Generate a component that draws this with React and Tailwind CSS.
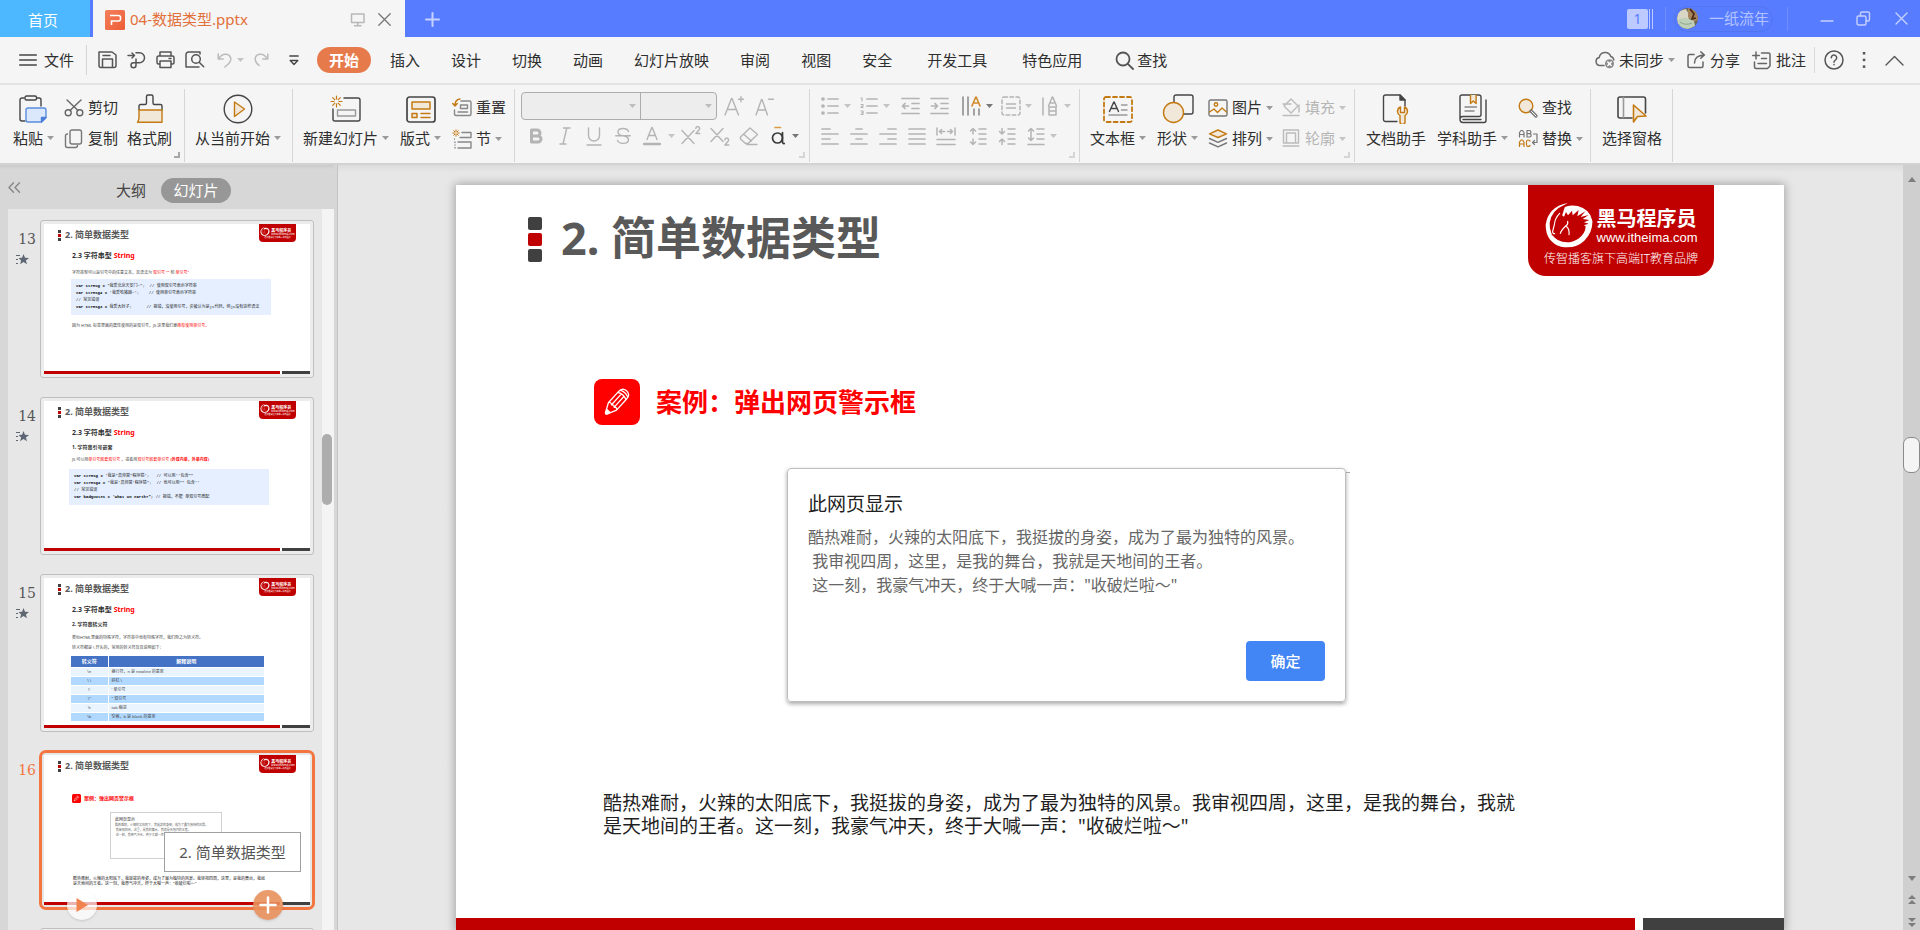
import React from "react";

const DARK = "#454545";
const GREY = "#b4b4b4";
const GOLD = "#c47a12";
const CREAM = "#f1e8da";

/* ---------- small drawing helpers ---------- */

function Ico({ w = 20, h = 20, c = DARK, sw = 1.4, children }) {
  return (
    <svg width={w} height={h} viewBox={`0 0 ${w} ${h}`} fill="none" stroke={c} strokeWidth={sw} strokeLinecap="round" strokeLinejoin="round" className="shrink-0" aria-hidden="true">
      {children}
    </svg>
  );
}

function Caret({ c = "#9a9a9a" }) {
  return (
    <svg width="7" height="4" viewBox="0 0 7 4" className="shrink-0" aria-hidden="true">
      <path d="M0 0h7L3.5 4z" fill={c} />
    </svg>
  );
}

function Launcher({ c = "#d5d5d5" }) {
  return (
    <button aria-label="更多选项" className="absolute right-1 bottom-1">
      <svg width="6" height="6" viewBox="0 0 6 6" className="block">
        <path d="M5 0v5H0" fill="none" stroke={c} strokeWidth="2" />
      </svg>
    </button>
  );
}

/* ---------- ribbon building blocks ---------- */

function Group({ className = "", children }) {
  return <div className={`relative flex shrink-0 border-r border-[#d6d6d6] pt-[3px] ${className}`}>{children}</div>;
}

function BigButton({ icon, label, caret }) {
  return (
    <button className="flex shrink-0 flex-col items-center gap-1 self-start pt-[2px] whitespace-nowrap">
      <span className="flex h-[30px] items-center">{icon}</span>
      <span className="flex h-5 items-center gap-1">
        {label}
        {caret && <Caret />}
      </span>
    </button>
  );
}

function SmallButton({ icon, label, caret, muted }) {
  return (
    <button className={`flex h-[31px] items-center gap-1 whitespace-nowrap ${muted ? "text-[#b5b5b5]" : ""}`}>
      {icon}
      <span>{label}</span>
      {caret && <Caret c={muted ? "#c4c4c4" : "#9a9a9a"} />}
    </button>
  );
}

function Tool({ label, className = "w-[29px]", children }) {
  return (
    <button aria-label={label} className={`flex h-7 shrink-0 items-center justify-center ${className}`}>
      {children}
    </button>
  );
}

function Combo({ label, className }) {
  return (
    <div className={`relative flex items-center ${className}`}>
      <select aria-label={label} disabled className="h-full w-full appearance-none bg-transparent" />
      <span className="pointer-events-none absolute right-1">
        <Caret c="#bdbdbd" />
      </span>
    </div>
  );
}

/* ---------- title bar ---------- */

function TitleBar() {
  return (
    <header className="flex h-[37px] shrink-0 bg-[#587cff] text-[15px]">
      <button className="mr-[3px] w-[90px] bg-[#4db8ff] pt-1 pr-1 text-white">首页</button>
      <div className="flex w-[312px] items-center bg-[#f5f5f5] pt-[2px] pr-[14px] pl-3">
        <svg width="20" height="20" viewBox="0 0 20 20" className="shrink-0" aria-hidden="true">
          <defs>
            <linearGradient id="pg" x1="0" y1="0" x2="1" y2="1">
              <stop offset="0" stopColor="#f4805c" />
              <stop offset="1" stopColor="#ec5c36" />
            </linearGradient>
          </defs>
          <rect width="20" height="20" rx="1.500" fill="url(#pg)" />
          <path d="M5 5.500h8.500a2 2 0 0 1 2 2v1.500a2 2 0 0 1-2 2H6.500V15" fill="none" stroke="#fff" strokeWidth="1.600" />
        </svg>
        <span className="ml-[5px] flex-1 text-[#e2703a]">04-数据类型.pptx</span>
        <Ico w={16} h={14} c="#b8b8b8" sw={1.5}>
          <path d="M1.500 1h12.500v8.500h-12.500zM7.750 9.500v3M4.500 12.800h6.500" />
        </Ico>
        <button aria-label="关闭标签" className="ml-3">
          <Ico w={13} h={13} c="#777" sw={1.3}>
            <path d="M.8.8l11.400 11.400M12.200.8L.8 12.200" />
          </Ico>
        </button>
      </div>
      <button aria-label="新建标签" className="ml-5 pt-[2px]">
        <Ico w={15} h={15} c="#c5d1ff" sw={2}>
          <path d="M7.500 1v13M1 7.500h13" />
        </Ico>
      </button>
      <div className="ml-auto flex items-center pr-3">
        <div className="flex items-center gap-px">
          <span className="flex h-5 w-[21px] items-center justify-center rounded-xs bg-[#bccaff] text-sm text-[#587cff]">1</span>
          <span className="h-5 w-px bg-[#bccaff]" />
          <span className="ml-px h-5 w-px bg-[#bccaff]" />
        </div>
        <span className="ml-3 h-6 w-px bg-[#6f8eff]" />
        <button className="ml-2 flex h-[26px] items-center gap-[11px] rounded-full border border-[#5274ee] pr-[3px] pl-[2px] text-[#b3c3ff]">
          <svg width="21" height="21" viewBox="0 0 21 21" aria-hidden="true">
            <defs>
              <clipPath id="av">
                <circle cx="10.500" cy="10.500" r="10.500" />
              </clipPath>
            </defs>
            <g clipPath="url(#av)">
              <rect width="21" height="21" fill="#6d6656" />
              <path d="M0 6q3-4 9-5l4 7-4 8H0z" fill="#d9d6c6" />
              <path d="M11 0l10 3v9l-5 2-5-5z" fill="#a8845c" />
              <path d="M13 1l4 5-2 5 4-1" stroke="#4a2c18" strokeWidth="1.800" fill="none" />
              <path d="M1 12q6-4 11-1l5 2 1 5-8 4-8-3z" fill="#bfd0b9" />
              <path d="M3 14q5 4 12 1" stroke="#8da48b" fill="none" />
            </g>
          </svg>
          <span>一纸流年</span>
        </button>
        <span className="ml-[14px] h-6 w-px bg-[#6f8eff]" />
        <button aria-label="最小化" className="ml-8">
          <Ico w={14} h={14} c="#c5d1ff">
            <path d="M1 9h12" />
          </Ico>
        </button>
        <button aria-label="还原" className="ml-[22px]">
          <Ico w={15} h={15} c="#c5d1ff">
            <rect x="1" y="5" width="9" height="9" rx="1.500" />
            <path d="M4.500 4.800V2.500a1.500 1.500 0 0 1 1.500-1.500h6a1.500 1.500 0 0 1 1.500 1.500v6a1.500 1.500 0 0 1-1.500 1.500h-1.800" />
          </Ico>
        </button>
        <button aria-label="关闭" className="ml-6">
          <Ico w={13} h={13} c="#c5d1ff">
            <path d="M1 1l11 11M12 1L1 12" />
          </Ico>
        </button>
      </div>
    </header>
  );
}

/* ---------- menu bar ---------- */

function MenuBar() {
  return (
    <nav className="flex h-12 shrink-0 items-center border-b-2 border-[#e4e4e4] bg-[#f5f5f5] pr-4 pl-[19px] text-[15px] whitespace-nowrap">
      <button className="flex items-center gap-[7px]">
        <Ico w={18} h={12}>
          <path d="M.7 1h16.600M.7 6h16.600M.7 11h16.600" />
        </Ico>
        文件
      </button>
      <span className="mr-[11px] ml-3 h-[30px] w-px bg-[#d4d4d4]" />
      <div className="flex items-center gap-[10px]">
        <button aria-label="保存">
          <Ico w={19} h={18} sw={1.5} c="#555">
            <path d="M1 1h13l4 3v10.500a2 2 0 0 1-2 2H3a2 2 0 0 1-2-2z" />
            <path d="M4.500 16V8h10v8M5 4.500h7" />
          </Ico>
        </button>
        <button aria-label="输出">
          <Ico w={19} h={18} sw={1.5} c="#555">
            <path d="M1 4.500h6.500M5 2l2.500 2.500L5 7M9 1.800h3.500a5 5 0 0 1 0 10H6.500a2.500 2.500 0 1 0 2.500 2.500V8" />
          </Ico>
        </button>
        <button aria-label="打印">
          <Ico w={19} h={18} sw={1.5} c="#555">
            <path d="M4 5V1h11v4M4 13H2.500A1.500 1.500 0 0 1 1 11.500V6.500A1.500 1.500 0 0 1 2.500 5h14A1.500 1.500 0 0 1 18 6.500v5a1.500 1.500 0 0 1-1.500 1.500H15M4 10h11v6.500H4zM13 7.500h2" />
          </Ico>
        </button>
        <button aria-label="打印预览">
          <Ico w={20} h={18} sw={1.5} c="#555">
            <path d="M15 3V1H3.500A2.500 2.500 0 0 0 1 3.500V16h13" />
            <circle cx="11" cy="8" r="4.300" />
            <path d="M14.200 11.200l4.500 4.500" />
          </Ico>
        </button>
        <button aria-label="撤销" className="ml-[2px] flex items-center gap-[5px]">
          <Ico w={15} h={16} c="#bcbcbc" sw={1.5}>
            <path d="M1.200 2v5h5M1.500 6.800Q5 1.500 9.500 2.300q4.500 1 4.300 5.200-.3 3.500-6 7.500" />
          </Ico>
          <Caret c="#c4c4c4" />
        </button>
        <button aria-label="重做">
          <Ico w={15} h={16} c="#bcbcbc" sw={1.5}>
            <path d="M13.800 2v5h-5M13.500 6.800Q10 1.500 5.500 2.300 1 3.300 1.200 7.500q.3 3.500 4 6" />
          </Ico>
        </button>
        <button aria-label="自定义" className="ml-[10px]">
          <Ico w={10} h={11} sw={1.3}>
            <path d="M.8 1h8.400M1.200 5.500h7.600L5 9.500z" />
          </Ico>
        </button>
      </div>
      <div className="ml-[18px] flex items-center gap-[31px] text-[#2e2e2e]">
        <button className="-mr-3 h-[26px] rounded-full bg-[#e77a4b] px-3 font-bold text-white">开始</button>
        <button>插入</button>
        <button>设计</button>
        <button>切换</button>
        <button>动画</button>
        <button>幻灯片放映</button>
        <button>审阅</button>
        <button>视图</button>
        <button>安全</button>
        <button className="mx-1">开发工具</button>
        <button>特色应用</button>
        <button className="ml-[2px] flex items-center gap-[3px]">
          <Ico w={19} h={19} sw={1.8} c="#555">
            <circle cx="8" cy="8" r="6.500" />
            <path d="M12.800 12.800l5.200 5.200" />
          </Ico>
          查找
        </button>
      </div>
      <div className="ml-auto flex items-center text-[#2e2e2e]">
        <button className="flex items-center gap-1">
          <Ico w={20} h={18} c="#6a6a6a" sw={1.5}>
            <path d="M9 14.500H5a4 4 0 0 1-.8-7.900A6 6 0 0 1 15.800 5.500a4 4 0 0 1 3 3.500" />
            <circle cx="14.500" cy="12.800" r="4.500" fill="#8a8a8a" stroke="none" />
            <path d="M12.800 11.100l3.400 3.400M16.200 11.100l-3.400 3.400" stroke="#fff" />
          </Ico>
          未同步
          <Caret />
        </button>
        <button className="ml-3 flex items-center gap-1">
          <Ico w={19} h={18} c="#666" sw={1.500}>
            <path d="M7 3.500H2.500A1.500 1.500 0 0 0 1 5v10a1.500 1.500 0 0 0 1.500 1.500h12A1.500 1.500 0 0 0 16 15v-4M7.500 12q0-7.500 9.500-8M13.800.9l3.600 3.100-3.600 3.200" />
          </Ico>
          分享
        </button>
        <button className="ml-3 flex items-center gap-1">
          <Ico w={20} h={19} c="#666" sw={1.500}>
            <path d="M4 1v7M.7 4.500h6.600M9.500 2h7A1.500 1.500 0 0 1 18 3.500V15l-2.500 2.500H4A1.500 1.500 0 0 1 2.500 16v-5M9.500 7.500h5M6 12.500h8.500" />
          </Ico>
          批注
        </button>
        <span className="mr-[9px] ml-2 h-[26px] w-px bg-[#d9d9d9]" />
        <button aria-label="帮助">
          <Ico w={20} h={20} sw={1.500} c="#555">
            <circle cx="10" cy="10" r="9" />
            <path d="M7.300 7.800a2.700 2.700 0 1 1 4.200 2.200c-1 .7-1.500 1.100-1.500 2.200M10 14.500v.3" />
          </Ico>
        </button>
        <button aria-label="更多" className="ml-[18px]">
          <svg width="4" height="16" viewBox="0 0 4 16" fill="#555">
            <rect x=".8" y="0" width="2.500" height="2.500" />
            <rect x=".8" y="6.700" width="2.500" height="2.500" />
            <rect x=".8" y="13.400" width="2.500" height="2.500" />
          </svg>
        </button>
        <button aria-label="收起功能区" className="ml-[19px]">
          <Ico w={19} h={11} c="#555">
            <path d="M1 10l8.500-8.500L18 10" />
          </Ico>
        </button>
      </div>
    </nav>
  );
}

/* ---------- ribbon ---------- */

function FontGroup() {
  return (
    <Group className="w-[295px] flex-col gap-[2px] pl-[6px]">
      <div className="flex items-center">
        <div className="flex h-7 w-[196px] overflow-hidden rounded border border-[#acacac] bg-[#ededed]">
          <Combo label="字体" className="w-[119px] border-r border-[#acacac]" />
          <Combo label="字号" className="flex-1" />
        </div>
        <Tool label="增大字号" className="ml-[6px] w-[22px]">
          <Ico w={20} h={20} c={GREY}>
            <path d="M1 19L7.500 2.500h.5L14.500 19M3.500 13.500h8.500M17 .8v5M14.500 3.300h5" />
          </Ico>
        </Tool>
        <Tool label="减小字号" className="ml-2 w-[22px]">
          <Ico w={20} h={20} c={GREY}>
            <path d="M2 19L7.500 3.500h.5L13.500 19M4.200 14h7.500M14.500 3.300h5" />
          </Ico>
        </Tool>
      </div>
      <div className="flex items-center">
        <Tool label="加粗">
          <Ico w={14} h={16} c={GREY} sw={3}>
            <path d="M2.500 2h5.500a3 3 0 0 1 0 6H2.500zM2.500 8h6.500a3 3 0 0 1 0 6H2.500z" />
          </Ico>
        </Tool>
        <Tool label="斜体">
          <Ico w={12} h={18} c={GREY}>
            <path d="M4.500 1h6.500M1 17h6M7.800 1L4 17" />
          </Ico>
        </Tool>
        <Tool label="下划线">
          <Ico w={16} h={19} c={GREY}>
            <path d="M2.500 1v7.500a5.500 5.500 0 0 0 11 0V1M1 18h14" />
          </Ico>
        </Tool>
        <Tool label="删除线">
          <Ico w={16} h={18} c={GREY}>
            <path d="M13.500 4.500Q12.500 1.500 8 1.500 3 1.500 3 5q0 3 5 3.800 5.500 1 5.500 4 0 3.600-5.500 3.600-4.500 0-5.500-3M.7 8.800h14.600" />
          </Ico>
        </Tool>
        <Tool label="字体颜色">
          <Ico w={18} h={20} c={GREY}>
            <path d="M4 13.500L8.800 1.500h.4L14 13.500M5.500 9.500h7" />
            <path d="M1 18h16" strokeWidth="2.500" />
          </Ico>
        </Tool>
        <Tool label="字体颜色选项" className="w-[10px]">
          <Caret c="#c4c4c4" />
        </Tool>
        <Tool label="上标">
          <Ico w={20} h={20} c={GREY}>
            <path d="M1 4.500l12 13M13 4.500L1 17.500M14.800 2.500a1.900 1.900 0 1 1 3.300 1.300L14.900 7.500h3.900" />
          </Ico>
        </Tool>
        <Tool label="下标">
          <Ico w={20} h={20} c={GREY}>
            <path d="M1 2.500l12 13M13 2.500L1 15.500M14.800 14a1.900 1.900 0 1 1 3.300 1.300L14.900 19h3.900" />
          </Ico>
        </Tool>
        <Tool label="清除格式">
          <Ico w={20} h={19} c={GREY}>
            <path d="M1.500 10L11 1l7.500 6.500L9 16.500H6.500L1.500 12zM5 7.500l7.500 6.500M8 17.500h10" />
          </Ico>
        </Tool>
        <Tool label="拼音指南">
          <Ico w={14} h={20} c="#3a3a3a" sw={1.700}>
            <circle cx="6.500" cy="12" r="5" />
            <path d="M11.500 6.500v9q0 2.500 2 2" />
            <path d="M4 1.500h5.500" stroke="#dd9a45" />
          </Ico>
        </Tool>
        <Caret c="#777" />
      </div>
      <Launcher />
    </Group>
  );
}

function Lines({ rows }) {
  return rows.map(([x1, x2], i) => <path key={i} d={`M${x1} ${2 + i * 5}H${x2}`} />);
}

function ParagraphGroup() {
  const full = [[1, 17], [1, 17], [1, 17], [1, 17]];
  return (
    <Group className="w-[270px] flex-col gap-[2px] pl-[5px]">
      <div className="flex items-center">
        <Tool label="项目符号">
          <Ico w={18} h={18} c={GREY} sw={1.700}>
            <path d="M7 2h10M7 9h10M7 16h10" />
            <circle cx="2" cy="2" r="1" />
            <circle cx="2" cy="9" r="1" />
            <circle cx="2" cy="16" r="1" />
          </Ico>
        </Tool>
        <Caret c="#c4c4c4" />
        <Tool label="编号" className="ml-[3px] w-[29px]">
          <Ico w={18} h={18} c={GREY} sw={1.700}>
            <path d="M7 2h10M7 9h10M7 16h10" />
            <path d="M1 1h1v3M1 7.500h2v1.200l-2 1.600h2M1 14h2v3.300H1M2 15.600h1" strokeWidth="1.200" />
          </Ico>
        </Tool>
        <Caret c="#c4c4c4" />
        <Tool label="减少缩进" className="ml-[6px] w-[29px]">
          <Ico w={19} h={18} c={GREY} sw={1.700}>
            <path d="M1 1.500h17M11 6.500h7M11 11.500h7M1 16.500h17M1.500 9h6M4 6.500L1.500 9 4 11.500" />
          </Ico>
        </Tool>
        <Tool label="增加缩进">
          <Ico w={19} h={18} c={GREY} sw={1.700}>
            <path d="M1 1.500h17M11 6.500h7M11 11.500h7M1 16.500h17M1.500 9h6M5 6.500L7.500 9 5 11.500" />
          </Ico>
        </Tool>
        <Tool label="文字方向" className="ml-[3px] w-[29px]">
          <Ico w={19} h={20} c="#8f8f8f" sw={1.600}>
            <path d="M1 1v18M6 1v18M12 13v6M17 13v6" />
            <path d="M10 10l3.800-9h.4L18 10M11.500 7h5" stroke="#d18a2a" />
          </Ico>
        </Tool>
        <Caret c="#777" />
        <Tool label="对齐文本" className="ml-[3px] w-[29px]">
          <Ico w={20} h={20} c={GREY} sw={1.500}>
            <rect x="1" y="1" width="18" height="18" rx="2" strokeDasharray="3.500 2.500" />
            <path d="M5.500 8h9M5.500 12h9" />
          </Ico>
        </Tool>
        <Caret c="#c4c4c4" />
        <Tool label="转换图形" className="ml-[3px] w-[29px]">
          <Ico w={16} h={20} c={GREY} sw={1.500}>
            <path d="M1 2v17M6.500 10l3.800-9h.4l3.800 9M8 7h5M7 19v-8h7v8zM7 15h7" />
          </Ico>
        </Tool>
        <Caret c="#c4c4c4" />
      </div>
      <div className="flex items-center">
        <Tool label="左对齐">
          <Ico w={18} h={19} c={GREY} sw={1.700}><Lines rows={[[1, 9], [1, 17], [1, 9], [1, 17]]} /></Ico>
        </Tool>
        <Tool label="居中">
          <Ico w={18} h={19} c={GREY} sw={1.700}><Lines rows={[[6, 12], [1, 17], [6, 12], [1, 17]]} /></Ico>
        </Tool>
        <Tool label="右对齐">
          <Ico w={18} h={19} c={GREY} sw={1.700}><Lines rows={[[9, 17], [1, 17], [9, 17], [1, 17]]} /></Ico>
        </Tool>
        <Tool label="两端对齐">
          <Ico w={18} h={19} c={GREY} sw={1.700}><Lines rows={full} /></Ico>
        </Tool>
        <Tool label="分散对齐">
          <Ico w={20} h={19} c={GREY} sw={1.500}>
            <path d="M1 1v7M19 1v7M3.500 4.500h5M5.500 2.500l-2 2 2 2M11.500 4.500h5M14.500 2.500l2 2-2 2M1 12.500h18M1 17.500h18" />
          </Ico>
        </Tool>
        <Tool label="增大行距" className="ml-[3px] w-[29px]">
          <Ico w={18} h={19} c={GREY} sw={1.500}>
            <path d="M10 2h7M10 7h7M10 12h7M10 17h7M4 7V1.500M1.500 4L4 1.500 6.500 4M4 12v5.500M1.500 15L4 17.500 6.500 15" />
          </Ico>
        </Tool>
        <Tool label="减小行距">
          <Ico w={18} h={19} c={GREY} sw={1.500}>
            <path d="M10 2h7M10 7h7M10 12h7M10 17h7M4 1.500V7M1.500 4.500L4 7l2.500-2.500M4 17.500V12M1.500 14.500L4 12l2.500 2.500" />
          </Ico>
        </Tool>
        <Tool label="行距">
          <Ico w={18} h={19} c={GREY} sw={1.500}>
            <path d="M10 2h7M10 7h7M10 12h7M1 17.500h16M4 1.500v12M1.500 4L4 1.500 6.500 4M1.500 11L4 13.500 6.500 11" />
          </Ico>
        </Tool>
        <Caret c="#c4c4c4" />
      </div>
      <Launcher />
    </Group>
  );
}

function Ribbon() {
  return (
    <section className="flex h-[80px] shrink-0 items-stretch overflow-hidden border-b-2 border-[#d2d2d2] bg-[#f5f5f5] pt-1 pb-px text-[15px] text-[#2e2e2e]">
      <Group className="w-[185px] pl-[13px]">
        <BigButton
          label="粘贴"
          caret
          icon={
            <Ico w={30} h={28}>
              <path d="M5 3H3a2 2 0 0 0-2 2v19a2 2 0 0 0 2 2h3M18 3h2a2 2 0 0 1 2 2v6" />
              <rect x="6" y="1" width="11.500" height="4" rx="1.500" />
              <path d="M9 13h16a2 2 0 0 1 2 2v7.500L22.500 27H9a2 2 0 0 1-2-2V15a2 2 0 0 1 2-2z" fill="#dbe7fa" stroke="#5b8de0" />
              <path d="M27 22.500h-4.500V27z" fill="#4d7fd8" stroke="#4d7fd8" />
            </Ico>
          }
        />
        <div className="ml-[10px]">
          <SmallButton
            label="剪切"
            icon={
              <Ico w={20} h={18} c="#666">
                <circle cx="4.200" cy="13.700" r="3" />
                <circle cx="15.800" cy="13.700" r="3" />
                <path d="M6 11.500L17 1M14 11.500L3 1" />
              </Ico>
            }
          />
          <SmallButton
            label="复制"
            icon={
              <Ico w={20} h={20} c="#777">
                <rect x="6" y="1" width="11.500" height="14" rx="2" />
                <path d="M3.500 5Q1.500 5 1.500 7v9.500a2 2 0 0 0 2 2h8a2 2 0 0 0 2-2" />
              </Ico>
            }
          />
        </div>
        <div className="ml-[9px]">
          <BigButton
            label="格式刷"
            icon={
              <Ico w={28} h={30}>
                <path d="M3 16v-4a1.500 1.500 0 0 1 1.500-1.500H9q1.500 0 1.500-1.500V2.500A1.500 1.500 0 0 1 12 1h3.500A1.500 1.500 0 0 1 17 2.500V9q0 1.500 1.500 1.500h6A1.500 1.500 0 0 1 26 12v4" />
                <path d="M3 16h23v12.300H1.500Q3 26 3 24z" fill={CREAM} stroke={GOLD} />
              </Ico>
            }
          />
        </div>
        <Launcher c="#a8a8a8" />
      </Group>

      <Group className="w-[108px] pl-[10px]">
        <BigButton
          label="从当前开始"
          caret
          icon={
            <Ico w={30} h={30}>
              <circle cx="15" cy="15" r="13.800" />
              <path d="M11.500 8v14.500L21.500 15z" fill={CREAM} stroke={GOLD} />
            </Ico>
          }
        />
      </Group>

      <Group className="w-[222px] gap-[11px] pl-[10px]">
        <BigButton
          label="新建幻灯片"
          caret
          icon={
            <Ico w={32} h={28}>
              <path d="M14 3h14a2 2 0 0 1 2 2v19a2 2 0 0 1-2 2H5a2 2 0 0 1-2-2V14" />
              <rect x="7.500" y="15" width="18" height="6" stroke="#999" />
              <path d="M6.500 1v11M1 6.500h11M2.700 2.700l7.600 7.600M10.300 2.700l-7.600 7.600" stroke={GOLD} strokeWidth="1.200" />
              <circle cx="6.500" cy="6.500" r="2" fill="#f5f5f5" stroke="none" />
            </Ico>
          }
        />
        <BigButton
          label="版式"
          caret
          icon={
            <Ico w={30} h={27} sw={1.700}>
              <rect x="1" y="1" width="28" height="25" rx="2.500" />
              <path d="M6 6h18v7H6zM6 17.500h5v4H6zM15 17.500h9M15 21.500h9" stroke={GOLD} fill={CREAM} strokeWidth="1.500" />
            </Ico>
          }
        />
        <div>
          <SmallButton
            label="重置"
            icon={
              <Ico w={20} h={19} c="#888">
                <path d="M9 3h8.500A1.500 1.500 0 0 1 19 4.500V16a1.500 1.500 0 0 1-1.500 1.500H4A1.500 1.500 0 0 1 2.500 16v-4M8.500 7h7v3.500h-7zM6 14h9.500" />
                <path d="M8 1Q3 1.500 3 7.500M.7 5.500L3 8l2.300-2.500" stroke={GOLD} />
              </Ico>
            }
          />
          <SmallButton
            label="节"
            caret
            icon={
              <Ico w={20} h={20} c="#888">
                <path d="M10 3.500h9v5H8M6 13h13v6H6M3 13v.5M3 19v-.5M3 16v.1M2.500 10v.1" />
                <path d="M4 .8v6.400M.8 4h6.400M1.700 1.700l4.600 4.600M6.300 1.700L1.700 6.300" stroke={GOLD} strokeWidth="1" />
                <circle cx="4" cy="4" r="1" fill="#f5f5f5" stroke="none" />
              </Ico>
            }
          />
        </div>
      </Group>

      <FontGroup />
      <ParagraphGroup />

      <Group className="w-[275px] pl-[10px]">
        <BigButton
          label="文本框"
          caret
          icon={
            <Ico w={30} h={27}>
              <rect x="1" y="1" width="28" height="25" rx="2" stroke={GOLD} strokeWidth="1.800" strokeDasharray="4 3" />
              <path d="M6.500 15.500L10.800 6h.4l4.300 9.500M8 12.500h6" />
              <path d="M18.500 9h5.500M18.500 14h5.500M6 19h18" stroke="#999" />
            </Ico>
          }
        />
        <div className="ml-[11px]">
          <BigButton
            label="形状"
            caret
            icon={
              <Ico w={32} h={30}>
                <rect x="12" y="1" width="19" height="19" rx="2" />
                <circle cx="11.500" cy="18.500" r="10" fill={CREAM} stroke={GOLD} />
              </Ico>
            }
          />
        </div>
        <div className="ml-[10px]">
          <SmallButton
            label="图片"
            caret
            icon={
              <Ico w={20} h={18} c="#777">
                <rect x="1" y="1" width="18" height="16" rx="1.500" />
                <path d="M1.500 13l4.500-3 3.500 3.500 4.500-4.500 4.500 4" stroke={GOLD} />
                <circle cx="8" cy="5.500" r="1.700" stroke={GOLD} />
              </Ico>
            }
          />
          <SmallButton
            label="排列"
            caret
            icon={
              <Ico w={20} h={19} c="#777">
                <path d="M10 1l8.500 3.800L10 8.500 1.500 4.800z" fill={CREAM} stroke={GOLD} />
                <path d="M1.500 9.500L10 13.300l8.500-3.800M1.500 14L10 17.800l8.500-3.800" />
              </Ico>
            }
          />
        </div>
        <div className="ml-[9px]">
          <SmallButton
            label="填充"
            caret
            muted
            icon={
              <Ico w={19} h={19} c="#bbb">
                <path d="M2 8l7-7 7 7-7 7zM1 6h8M17 7v7M1 17.500h16" />
              </Ico>
            }
          />
          <SmallButton
            label="轮廓"
            caret
            muted
            icon={
              <Ico w={19} h={19} c="#bbb">
                <path d="M1.500 1h15v13h-15zM4.500 4h9v10h-9zM1 17h16" />
              </Ico>
            }
          />
        </div>
        <Launcher />
      </Group>

      <Group className="w-[236px] pl-[11px]">
        <BigButton
          label="文档助手"
          icon={
            <Ico w={28} h={30}>
              <path d="M15 27.500H3.500a2 2 0 0 1-2-2V3a2 2 0 0 1 2-2H18l5 5v6" />
              <path d="M18 1v5h5z" fill={DARK} />
              <path d="M18.500 13v5.500h4V13q3 1.200 3 4.500 0 2.500-2.500 4V28a2 2 0 0 1-5 0v-6.500q-2.500-1.500-2.500-4 0-3.300 3-4.500z" fill={CREAM} stroke={GOLD} />
            </Ico>
          }
        />
        <div className="ml-[11px]">
          <BigButton
            label="学科助手"
            caret
            icon={
              <Ico w={30} h={30}>
                <path d="M4 22.500h17a2 2 0 0 0 2-2V3a2 2 0 0 0-2-2H4a2 2 0 0 0-2 2v22.500a3 3 0 0 0 3 3h21a2 2 0 0 0 2-2V6M2 25q0-2.500 3-2.500M5 25.500h18" />
                <path d="M12.500 1v8.500L15.300 7l2.800 2.500V1" fill={CREAM} stroke={GOLD} />
                <path d="M7 13h11.500M7 17h9" stroke="#888" />
              </Ico>
            }
          />
        </div>
        <div className="ml-[10px]">
          <SmallButton
            label="查找"
            icon={
              <Ico w={20} h={20}>
                <circle cx="8" cy="8" r="6.800" fill={CREAM} stroke={GOLD} />
                <path d="M13 13l5 5" stroke="#777" strokeWidth="3.200" />
                <path d="M13.500 13.500l4.500 4.500" stroke="#fff" strokeWidth="1" />
              </Ico>
            }
          />
          <SmallButton
            label="替换"
            caret
            icon={
              <Ico w={20} h={19} c="#777">
                <path d="M1.500 8V3.500L3 1.500h1.500L6 3.500V8M1.500 5.500H6M9 1.500v6.500h2.500a1.600 1.600 0 0 0 0-3.300H9h2.300a1.600 1.600 0 0 0 0-3.200z" strokeWidth="1.200" />
                <path d="M1.500 17.500V13L3 11h1.500L6 13v4.500M1.500 15H6M12 12q-1-1-2-1-1.500 0-1.500 2v2.500q0 2 1.500 2 1 0 2-1" stroke={GOLD} strokeWidth="1.200" />
                <path d="M15.500 5H19v8.500h-4.500M16.500 11.500l-2 2 2 2" strokeWidth="1.200" />
              </Ico>
            }
          />
        </div>
      </Group>

      <Group className="w-[82px] pl-[11px]">
        <BigButton
          label="选择窗格"
          icon={
            <Ico w={30} h={28} sw={1.600}>
              <path d="M15 23H3a2 2 0 0 1-2-2V4a2 2 0 0 1 2-2h23.500a2 2 0 0 1 2 2v14" />
              <path d="M6.500 2.500V22.500" stroke="#999" />
              <path d="M16.500 10v17l4-5.500 8.500-.5z" fill={CREAM} stroke={GOLD} />
            </Ico>
          }
        />
      </Group>
    </section>
  );
}

/* ---------- brand badge ---------- */

function Horse({ w, h }) {
  return (
    <svg width={w} height={h} viewBox="194 124 144 138" aria-hidden="true" className="shrink-0">
      <path d="M258 128Q204 140 196 192q0 52 46 66 42 8 70-18 26-26 24-60-6-34-44-44-28-6-52 10 4-8 22-20z" fill="#fff" />
      <path d="M256 131Q214 148 208 186q-2 36 24 52 32 16 62-4 22-16 22-38l-6-2 15-5-14-4 16-7-20-3 18-12-24 6 14-17-24 15 4-19-18 16-2-14-12 14-6-10-6 14-10-7q-20 12-22 44l-5 14q-1 10 8 2 8-30 20-44l-4 2q-12 16-16 42l8-8z" fill="#c00000" />
      <path d="M238 158q-14 14-16 34l-5 20q0 8 6 7M262 182q2 10-6 14-14 14-16 22M256 196q12 6 10 26" fill="none" stroke="#fff" strokeWidth="3.500" strokeLinecap="round" />
    </svg>
  );
}

function Badge() {
  return (
    <div className="flex h-[91px] w-[186px] flex-col items-center rounded-b-[18px] bg-[#c00000] pt-[17px] text-white">
      <div className="flex items-center gap-1">
        <Horse w={48} h={46} />
        <div className="w-[101px] pt-1">
          <p className="text-xl leading-[22px] font-bold">黑马程序员</p>
          <p className="font-[Liberation_Sans] text-[13px] leading-4">www.itheima.com</p>
        </div>
      </div>
      <p className="text-xs leading-[22px] font-light whitespace-nowrap">传智播客旗下高端IT教育品牌</p>
    </div>
  );
}

function MiniBadge() {
  return (
    <div className="flex h-[18px] w-[37px] flex-col items-center rounded-b bg-[#c00000] pt-[3px] text-white">
      <div className="flex items-center gap-px">
        <Horse w={10} h={9} />
        <div>
          <p className="text-[4px] leading-[5px] font-bold">黑马程序员</p>
          <p className="font-[Liberation_Sans] text-[3px] leading-[3px]">www.itheima.com</p>
        </div>
      </div>
      <p className="text-[2px] leading-[4px]">传智播客旗下高端IT教育品牌</p>
    </div>
  );
}

function Pencil({ size }) {
  return (
    <svg width={size} height={size} viewBox="0 0 46 46" className="shrink-0" aria-hidden="true">
      <rect width="46" height="46" rx="8" fill="#fe0000" />
      <g transform="rotate(42 22.500 23)" fill="none" stroke="#fff" strokeWidth="1.300" strokeLinejoin="round">
        <path d="M17 14q0-6 5.500-6t5.500 6v15l-4.500 9.500q-1 1-2 0L17 29z" />
        <path d="M17 12q5.500-3 11 0M17 15q5.500-3 11 0M20.700 14v14M24.300 14v14M17 28.500q1.800-2 3.700 0 1.800-2 3.600 0 1.800-2 3.700 0" />
        <path d="M20.300 35h4.400l-1.500 3.500h-1.400z" fill="#fff" />
      </g>
    </svg>
  );
}

/* ---------- thumbnails ---------- */

function Thumb({ n, selected, children, overlay }) {
  return (
    <li className="flex">
      <div className={`w-8 shrink-0 pt-[9px] pr-1 text-right font-[DejaVu_Serif] text-sm leading-5 ${selected ? "text-[#f3753f]" : "text-[#555]"}`}>
        {n}
        {!selected && (
          <svg width="13" height="11" viewBox="0 0 13 11" className="mt-[5px] ml-2" aria-label="动画">
            <path d="M7.500 0l1.500 3.700 4 .2-3.100 2.500 1.100 3.900-3.500-2.200L4.100 10.300l1-3.900L2.500 3.900l3.600-.2z" fill="#5f6674" />
            <path d="M0 1.500h4M0 5.500h2M0 9.500h2" stroke="#5f6674" />
          </svg>
        )}
      </div>
      <div className={`relative rounded-[3px] border p-[3px] ${selected ? "rounded-md border-transparent outline-3 -outline-offset-2 outline-[#f3753f]" : "border-[#bfbfbf] bg-[#ececec]"}`}>
        <article className="flex h-[150px] w-[266px] flex-col overflow-hidden bg-white">
          <div className="flex items-start pr-[14px] pl-[14px]">
            <div className="mt-[6px] flex flex-col gap-px">
              <i className="size-[3px] bg-[#404040]" />
              <i className="size-[3px] bg-[#c00000]" />
              <i className="size-[3px] bg-[#404040]" />
            </div>
            <h3 className="mt-1 ml-1 flex-1 text-[9px] leading-[14px] font-bold text-[#595959]">2. 简单数据类型</h3>
            <MiniBadge />
          </div>
          <div className="flex-1 pl-7 text-[4px] leading-[10px] whitespace-pre text-[#444]">{children}</div>
          <div className="flex h-[3px] gap-[2px]">
            <i className="flex-1 bg-[#c00000]" />
            <i className="w-7 bg-[#404040]" />
          </div>
        </article>
        {overlay}
      </div>
    </li>
  );
}

function StringHeading() {
  return (
    <h4 className="mt-[9px] text-[7px] leading-[10px] font-bold text-[#333]">
      2.3 字符串型 <span className="text-[#f00]">String</span>
    </h4>
  );
}

function CodeBox({ className, lines }) {
  return (
    <div className={`h-9 w-[200px] bg-[#e5efff] pt-1 pl-[5px] font-[Liberation_Mono,Noto_Sans_CJK_SC] leading-[7px] text-[#222] ${className}`}>
      {lines.map(([a, b], i) => (
        <p key={i}>
          <b className="text-black">{a}</b>
          {b}
        </p>
      ))}
    </div>
  );
}

const ESCAPES = [
  ["\\n", "换行符，n 是 newline 的意思"],
  ["\\ \\", "斜杠 \\"],
  ["\\'", "' 单引号"],
  ['\\"', '" 双引号'],
  ["\\t", "tab 缩进"],
  ["\\b", "空格，b 是 blank 的意思"],
];

function SlidePanel() {
  return (
    <aside className="flex w-[338px] shrink-0 flex-col border-r border-[#c4c4c4] bg-[#d7d7d7] pr-[3px]">
      <div className="flex h-[44px] shrink-0 items-center bg-linear-to-b from-[#cbcbcb] to-[#d7d7d7] to-10% pt-[7px] pl-2 text-[15px]">
        <button aria-label="收起面板" className="pb-[6px]">
          <Ico w={13} h={11} c="#888">
            <path d="M5.500.8L1 5.500l4.500 4.700M11.500.8L7 5.500l4.500 4.700" />
          </Ico>
        </button>
        <button className="ml-[95px] text-[#444]">大纲</button>
        <button className="ml-[15px] h-[25px] w-[70px] rounded-full bg-[#979797] text-white">幻灯片</button>
      </div>
      <div className="ml-2 flex min-h-0 flex-1 bg-[#e7e7e7]">
        <ol className="flex min-h-0 flex-1 flex-col gap-[19px] overflow-hidden pt-[11px]">
          <Thumb n="13">
            <StringHeading />
            <p className="mt-[7px]">
              字符串型可以是引号中的任意文本，其语法为 <span className="text-[#f00]">双引号 "" </span>和<span className="text-[#f00]"> 单引号''</span>
            </p>
            <CodeBox
              className="mt-px -ml-px"
              lines={[
                ["var strMsg = ", '"我爱北京天安门~";  // 使用双引号表示字符串'],
                ["var strMsg2 = ", "'我爱吃猪蹄~';    // 使用单引号表示字符串"],
                ["", "// 常见错误"],
                ["var strMsg3 = ", "我爱大肘子;      // 报错，没使用引号，会被认为是js代码，但js没有这些语法"],
              ]}
            />
            <p className="mt-[6px]">
              因为 HTML 标签里面的属性使用的是双引号，JS 这里我们更<span className="text-[#f00]">推荐使用单引号。</span>
            </p>
          </Thumb>
          <Thumb n="14">
            <StringHeading />
            <h5 className="mt-1 text-[5px] font-bold text-[#333]">1. 字符串引号嵌套</h5>
            <p className="mt-[3px]">
              JS 可以用<span className="text-[#f00]">单引号嵌套双引号</span> ，或者用<span className="text-[#f00]">双引号嵌套单引号 <b>(外双内单，外单内双)</b></span>
            </p>
            <CodeBox
              className="mt-1 -ml-[3px]"
              lines={[
                ["var strMsg = ", "'我是\"高帅富\"程序猿';   // 可以用''包含\"\""],
                ["var strMsg2 = ", "\"我是'高帅富'程序猿\";  // 也可以用\"\" 包含''"],
                ["", "// 常见错误"],
                ["var badQuotes = 'What on earth?\"; ", "// 报错，不能 单双引号搭配"],
              ]}
            />
          </Thumb>
          <Thumb n="15">
            <StringHeading />
            <h5 className="mt-1 text-[5px] font-bold text-[#333]">2. 字符串转义符</h5>
            <p className="mt-1">类似HTML里面的特殊字符，字符串中也有特殊字符，我们称之为转义符。</p>
            <p>转义符都是 \ 开头的，常用的转义符及其说明如下：</p>
            <table className="mt-[3px] -ml-px w-[193px] border-collapse text-[4px] leading-[8px]">
              <thead>
                <tr className="border-b border-white bg-[#4472c4] text-[5px] leading-[11px] text-white">
                  <th className="w-[37px] border-r border-white">转义符</th>
                  <th>解释说明</th>
                </tr>
              </thead>
              <tbody>
                {ESCAPES.map(([k, v]) => (
                  <tr key={k} className="border-b border-white odd:bg-[#e9f4ff] even:bg-[#b1d8ff]">
                    <td className="border-r border-white text-center">{k}</td>
                    <td className="pl-[3px]">{v}</td>
                  </tr>
                ))}
              </tbody>
            </table>
          </Thumb>
          <Thumb
            n="16"
            selected
            overlay={
              <>
                <div role="tooltip" className="absolute top-[80px] left-[123px] flex h-10 w-[137px] items-center justify-center border border-[#a0a0a0] bg-white text-[15px] text-[#555]">
                  2. 简单数据类型
                </div>
                <button aria-label="播放" className="absolute top-[138px] left-[26px] flex size-[30px] items-center justify-center rounded-full bg-white/70 shadow">
                  <svg width="12" height="14" viewBox="0 0 12 14">
                    <path d="M.5 0L12 7 .5 14z" fill="#f0824f" />
                  </svg>
                </button>
                <button aria-label="新建幻灯片" className="absolute top-[138px] left-[212px] flex size-[30px] items-center justify-center rounded-full bg-[#e8905c]/90 shadow">
                  <Ico w={18} h={18} c="#fff" sw={2.500}>
                    <path d="M9 1.500v15M1.500 9h15" />
                  </Ico>
                </button>
              </>
            }
          >
            <h4 className="mt-5 flex items-center gap-[3px] text-[5px] font-bold text-[#f00]">
              <Pencil size={9} />
              案例：弹出网页警示框
            </h4>
            <div className="mt-[9px] ml-[38px] h-[47px] w-[112px] border border-[#d0d0d0] pt-1 pl-1 text-[3px] leading-[5px] text-[#666]">
              <p className="text-[4px] leading-[6px] text-[#333]">此网页显示</p>
              <p>酷热难耐，火辣的太阳底下，我挺拔的身姿，成为了最为独特的风景。</p>
              <p> 我审视四周，这里，是我的舞台，我就是天地间的王者。</p>
              <p> 这一刻，我豪气冲天，终于大喊一声："收破烂啦～"</p>
            </div>
            <p className="mt-[17px] ml-px leading-[5px] text-[#222]">
              酷热难耐，火辣的太阳底下，我挺拔的身姿，成为了最为独特的风景。我审视四周，这里，是我的舞台，我就
              <br />
              是天地间的王者。这一刻，我豪气冲天，终于大喊一声："收破烂啦～"
            </p>
          </Thumb>
          <li className="ml-8 h-[158px] w-[274px] shrink-0 rounded-[3px] border border-[#bfbfbf] bg-[#ececec]" aria-hidden="true" />
        </ol>
        <div className="w-3 shrink-0 bg-[#f4f4f4] pt-[225px]">
          <div className="h-[71px] w-[10px] rounded-full bg-[#adadad]" />
        </div>
      </div>
    </aside>
  );
}

/* ---------- slide editor ---------- */

function Slide() {
  return (
    <article className="mt-5 mr-[119px] ml-[118px] flex aspect-[16/9] shrink-0 flex-col bg-white shadow-[0_0_9px_1px_rgba(0,0,0,0.3)]">
      <div className="flex items-start pr-[70px] pl-[72px]">
        <div className="mt-8 flex flex-col gap-[3px]">
          <i className="h-[13px] w-[14px] rounded-xs bg-[#404040]" />
          <i className="h-[13px] w-[14px] rounded-xs bg-[#c00000]" />
          <i className="h-[13px] w-[14px] rounded-xs bg-[#404040]" />
        </div>
        <h1 className="mt-[23px] ml-[19px] flex-1 text-[45px] leading-[60px] font-bold text-[#595959]">2. 简单数据类型</h1>
        <Badge />
      </div>
      <h2 className="mt-[103px] ml-[138px] flex items-center gap-4 text-[26px] leading-[46px] font-bold text-[#f00]">
        <Pencil size={46} />
        案例：弹出网页警示框
      </h2>
      <section className="relative mt-[43px] ml-[331px] flex h-[234px] w-[559px] flex-col rounded border border-[#bdbdbd] pt-[22px] pr-5 pb-5 pl-5 shadow-[0_2px_4px_rgba(0,0,0,0.35)]">
        <i className="absolute top-[3px] -right-[5px] h-px w-1 bg-[#aaa]" />
        <h3 className="text-[19px] leading-[26px] text-[#222]">此网页显示</h3>
        <p className="mt-2 text-base leading-6 whitespace-pre text-[#666]">
          {"酷热难耐，火辣的太阳底下，我挺拔的身姿，成为了最为独特的风景。\n 我审视四周，这里，是我的舞台，我就是天地间的王者。\n 这一刻，我豪气冲天，终于大喊一声：\"收破烂啦～\""}
        </p>
        <button className="mt-auto h-10 w-[79px] self-end rounded bg-[#4285f4] text-[15px] font-medium text-white">确定</button>
      </section>
      <p className="mt-[90px] ml-[147px] text-[19px] leading-[23px] whitespace-nowrap text-[#1f1f1f]">
        酷热难耐，火辣的太阳底下，我挺拔的身姿，成为了最为独特的风景。我审视四周，这里，是我的舞台，我就
        <br />
        是天地间的王者。这一刻，我豪气冲天，终于大喊一声："收破烂啦～"
      </p>
      <div className="mt-auto flex h-[14px] gap-2">
        <i className="flex-1 bg-[#c00000]" />
        <i className="w-[141px] bg-[#404040]" />
      </div>
    </article>
  );
}

function Arrow({ label, d, h = 5 }) {
  return (
    <button aria-label={label} className="block">
      <svg width="8" height={h} viewBox={`0 0 8 ${h}`} fill="#7d7d7d" className="block">
        <path d={d} />
      </svg>
    </button>
  );
}

export default function App() {
  return (
    <div lang="zh-CN" className="flex h-screen flex-col overflow-hidden bg-[#e7e7e7] font-[Noto_Sans,Noto_Sans_CJK_SC,sans-serif] text-[#2e2e2e]">
      <TitleBar />
      <MenuBar />
      <Ribbon />
      <div className="flex min-h-0 flex-1">
        <SlidePanel />
        <main className="flex min-w-0 flex-1 flex-col overflow-hidden bg-linear-to-b from-[#dcdcdc] to-[#e7e7e7] to-[8px]">
          <Slide />
        </main>
        <div className="flex w-[17px] shrink-0 flex-col items-center bg-[#cfcfcf] pt-3 pb-[3px]">
          <Arrow label="向上滚动" d="M4 0l4 5H0z" />
          <div className="mt-[255px] h-9 w-full rounded-[7px] border border-[#8a8a8a] bg-[#f4f4f4]" />
          <div className="mt-auto flex flex-col items-center gap-[14px]">
            <Arrow label="向下滚动" d="M0 0h8L4 5z" />
            <Arrow label="上一页" h={9} d="M4 0l4 4H0zM4 5l4 4H0z" />
            <Arrow label="下一页" h={9} d="M0 0h8L4 4zM0 5h8L4 9z" />
          </div>
        </div>
      </div>
    </div>
  );
}
